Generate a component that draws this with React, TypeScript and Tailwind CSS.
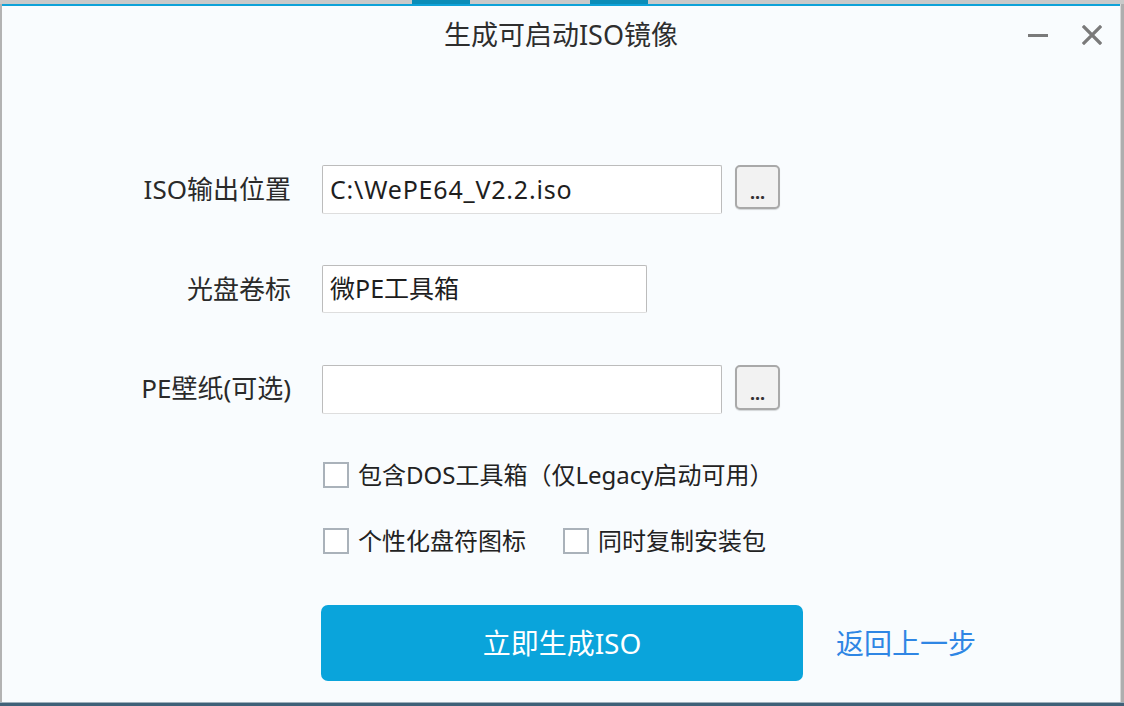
import React from "react";

const font = { fontFamily: '"Noto Sans", "Noto Sans CJK SC", sans-serif' };

function Checkbox({ label }: { label: string }) {
  return (
    <div className="flex items-center h-[26px]">
      <div className="w-[26px] h-[26px] border-2 border-[#aab2ba] bg-white" />
      <span className="ml-[9px] text-[24px] leading-[26px] text-[#222]">{label}</span>
    </div>
  );
}

export default function App() {
  return (
    <div className="w-[1124px] h-[706px] flex flex-col overflow-hidden bg-[#c8c8c8]" style={font}>
      {/* strip above window */}
      <div className="h-[4px] flex">
        <div className="w-[412px] bg-[#c9c9c9]" />
        <div className="w-[58px] bg-[#0b8db8]" />
        <div className="w-[120px] bg-[#c9c9c9]" />
        <div className="w-[58px] bg-[#0b8db8]" />
        <div className="flex-1 bg-[#c9c9c9]" />
      </div>
      <div className="flex-1 flex min-h-0">
        <div className="w-[2px] bg-[#b3b3b3]" />
        <div className="flex-1 flex flex-col bg-[#f9fcfe]">
          <div className="h-[2px] bg-[#0ea2d8]" />
          {/* title bar */}
          <div className="h-[58px] grid grid-cols-[1fr_auto_1fr] items-center">
            <div />
            <div className="text-[27px] leading-[30px] text-[#2e2e2e]">生成可启动ISO镜像</div>
            <div className="flex justify-end items-center pr-[18px]">
              <div className="w-[20px] h-[3px] bg-[#7a7a7a] mt-[1px]" />
              <svg className="ml-[34px] -mt-[1px]" width="20" height="20" viewBox="0 0 20 20">
                <path d="M2 2 L18 18 M18 2 L2 18" stroke="#7a7a7a" strokeWidth="3.2" strokeLinecap="square" />
              </svg>
            </div>
          </div>

          <div className="pt-[101px] flex flex-col">
            {/* row 1 */}
            <div className="flex items-start">
              <div className="w-[289px] h-[49px] flex items-center justify-end text-[26px] text-[#2a2a2a]">ISO输出位置</div>
              <div className="ml-[31px] w-[400px] h-[49px] bg-white border border-[#bcbcbc] border-b-[#dedede] rounded-[2px] flex items-center pl-[7px] text-[25px] tracking-[0.8px] text-[#1e1e1e]">
                C:\WePE64_V2.2.iso
              </div>
              <div className="ml-[13px] w-[45px] h-[44px] bg-[#f2f2f2] border-2 border-[#a9a9a9] rounded-[5px] shadow-[0_1px_1px_rgba(0,0,0,0.15)] flex items-end justify-center pb-[6px] text-[18px] leading-[18px] font-bold text-[#333]">
                ...
              </div>
            </div>
            {/* row 2 */}
            <div className="flex items-start mt-[51px]">
              <div className="w-[289px] h-[48px] flex items-center justify-end text-[26px] text-[#2a2a2a]">光盘卷标</div>
              <div className="ml-[31px] w-[325px] h-[48px] bg-white border border-[#bcbcbc] border-b-[#dedede] rounded-[2px] flex items-center pl-[7px] text-[25px] text-[#1e1e1e]">
                微PE工具箱
              </div>
            </div>
            {/* row 3 */}
            <div className="flex items-start mt-[52px]">
              <div className="w-[289px] h-[46px] flex items-center justify-end text-[26px] text-[#2a2a2a]">PE壁纸(可选)</div>
              <div className="ml-[31px] w-[400px] h-[49px] bg-white border border-[#bcbcbc] border-b-[#dedede] rounded-[2px]" />
              <div className="ml-[13px] w-[45px] h-[45px] bg-[#f2f2f2] border-2 border-[#a9a9a9] rounded-[5px] shadow-[0_1px_1px_rgba(0,0,0,0.15)] flex items-end justify-center pb-[6px] text-[18px] leading-[18px] font-bold text-[#333]">
                ...
              </div>
            </div>
            {/* checkboxes */}
            <div className="ml-[321px] mt-[48px] flex flex-col">
              <Checkbox label="包含DOS工具箱（仅Legacy启动可用）" />
              <div className="flex mt-[40px]">
                <Checkbox label="个性化盘符图标" />
                <div className="ml-[37px]">
                  <Checkbox label="同时复制安装包" />
                </div>
              </div>
            </div>
            {/* action row */}
            <div className="ml-[319px] mt-[51px] flex items-center">
              <div className="w-[482px] h-[76px] rounded-[7px] bg-[#0aa4db] flex items-center justify-center text-white text-[28px]">
                立即生成ISO
              </div>
              <div className="ml-[33px] text-[28px] text-[#2f86e4]">返回上一步</div>
            </div>
          </div>
        </div>
        <div className="w-[4px] flex">
          <div className="w-[1px] bg-[#d8d8d8]" />
          <div className="flex-1 bg-[#aeaeae]" />
        </div>
      </div>
      <div className="h-[4px] flex flex-col">
        <div className="h-[1px] bg-[#9fb0bc]" />
        <div className="flex-1 bg-[#3f6178]" />
      </div>
    </div>
  );
}
